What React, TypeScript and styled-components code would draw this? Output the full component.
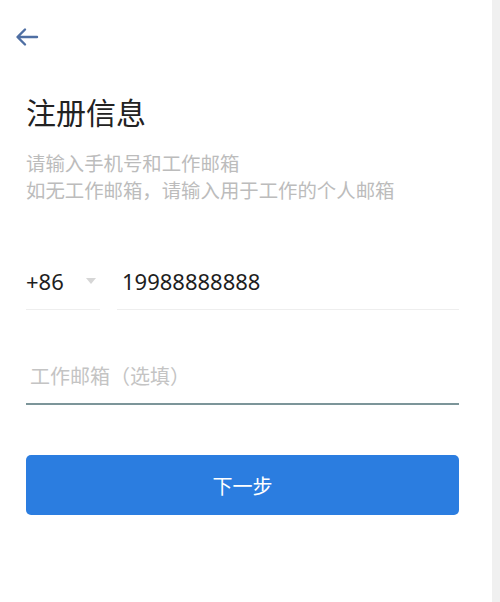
import React from 'react';
import styled, { createGlobalStyle } from 'styled-components';

const GlobalStyle = createGlobalStyle`
  html, body {
    margin: 0;
    padding: 0;
    background: #ffffff;
    font-family: "Noto Sans", "Noto Sans CJK SC", sans-serif;
  }
`;

const Page = styled.div`
  display: flex;
  width: 500px;
  height: 602px;
  overflow: hidden;
`;

const Main = styled.div`
  flex: 1;
  display: flex;
  flex-direction: column;
  padding: 0 33px 0 26px;
  background: #ffffff;
`;

const SideStrip = styled.div`
  width: 8px;
  background: #f0f0f0;
`;

const BackButton = styled.button`
  align-self: flex-start;
  margin: 27px 0 0 -11px;
  padding: 0;
  border: none;
  background: transparent;
  width: 24px;
  height: 20px;
  display: flex;
  align-items: center;
  justify-content: center;
`;

const Title = styled.h1`
  margin: 44px 0 0;
  font-size: 30px;
  font-weight: 400;
  line-height: 40px;
  color: #222222;
  font-family: "Noto Sans CJK SC", sans-serif;
`;

const Hint = styled.p`
  margin: 18px 0 0;
  font-size: 19.4px;
  line-height: 27px;
  color: #bcbcbc;
  font-family: "Noto Sans CJK SC", sans-serif;
`;

const PhoneRow = styled.div`
  display: flex;
  gap: 17px;
  margin-top: 50px;
`;

const Field = styled.div<{ $width?: number; $grow?: boolean; $focused?: boolean }>`
  display: flex;
  align-items: center;
  height: 57px;
  ${(p) => (p.$width ? `width: ${p.$width}px;` : '')}
  ${(p) => (p.$grow ? 'flex: 1;' : '')}
  border-bottom: ${(p) => (p.$focused ? '2px solid #7c9599' : '1px solid #eeeeee')};
  box-sizing: border-box;
`;

const FieldText = styled.span<{ $placeholder?: boolean; $indent?: number }>`
  font-size: ${(p) => (p.$placeholder ? '20px' : '22px')};
  color: ${(p) => (p.$placeholder ? '#c4c4c4' : '#1e1e1e')};
  padding-left: ${(p) => p.$indent ?? 0}px;
  font-family: ${(p) =>
    p.$placeholder ? '"Noto Sans CJK SC", sans-serif' : '"Noto Sans", sans-serif'};
`;

const Caret = styled.span`
  margin-left: 22px;
  width: 0;
  height: 0;
  border-left: 5px solid transparent;
  border-right: 5px solid transparent;
  border-top: 6px solid #d6d6d6;
`;

const EmailField = styled(Field)`
  margin-top: 38px;
`;

const NextButton = styled.button`
  margin-top: 50px;
  height: 60px;
  border: none;
  border-radius: 5px;
  background: #2b7de0;
  color: #ffffff;
  font-size: 20px;
  font-family: "Noto Sans CJK SC", sans-serif;
`;

const App: React.FC = () => {
  return (
    <Page>
      <GlobalStyle />
      <Main>
        <BackButton aria-label="返回">
          <svg width="24" height="20" viewBox="0 0 24 20" fill="none">
            <path
              d="M22 10H3M10 2.5L2.5 10L10 17.5"
              stroke="#4f6fa3"
              strokeWidth="2.4"
              strokeLinecap="round"
              strokeLinejoin="round"
            />
          </svg>
        </BackButton>
        <Title>注册信息</Title>
        <Hint>
          请输入手机号和工作邮箱
          <br />
          如无工作邮箱，请输入用于工作的个人邮箱
        </Hint>
        <PhoneRow>
          <Field $width={74}>
            <FieldText>+86</FieldText>
            <Caret />
          </Field>
          <Field $grow>
            <FieldText $indent={5}>19988888888</FieldText>
          </Field>
        </PhoneRow>
        <EmailField $focused>
          <FieldText $placeholder $indent={4}>工作邮箱（选填）</FieldText>
        </EmailField>
        <NextButton>下一步</NextButton>
      </Main>
      <SideStrip />
    </Page>
  );
};

export default App;
